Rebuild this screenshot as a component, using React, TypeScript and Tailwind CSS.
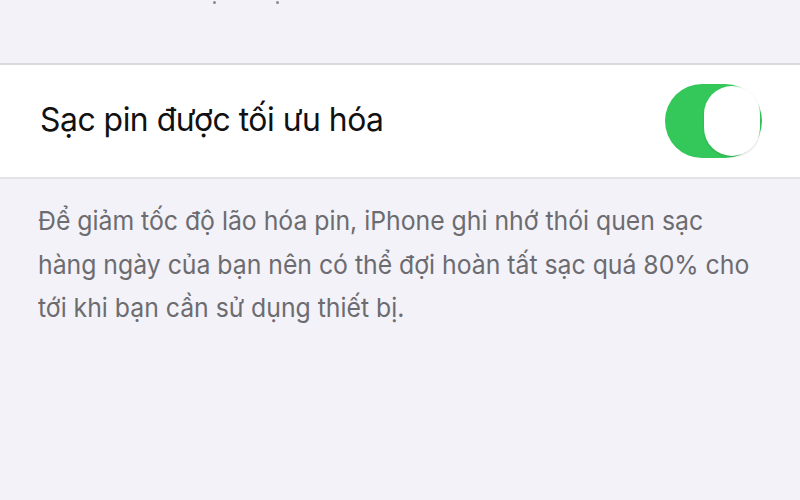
export default function App() {
  return (
    <div className="w-[800px] h-[500px] bg-[#f3f2f8] overflow-hidden flex flex-col" style={{ fontFamily: 'Inter, "Noto Sans", sans-serif' }}>
      <div className="h-[63px] flex items-start pt-[1px]">
        <div className="ml-[213px] w-[3px] h-[3px] rounded-full bg-[#8a8a90]" />
        <div className="ml-[60px] w-[3px] h-[3px] rounded-full bg-[#8a8a90]" />
      </div>
      <div className="h-[2px] bg-[#d9d9de]" />
      <div className="h-[112px] bg-white flex items-center justify-between pl-[40px] pr-[38px]">
        <div className="text-[33px] text-[#111] tracking-[-0.5px] origin-left scale-x-[0.966] whitespace-nowrap pb-[2px]">Sạc pin được tối ưu hóa</div>
        <div className="w-[97px] h-[74px] rounded-full bg-[#34c759] flex items-center justify-end pr-[2px]">
          <div className="w-[56px] h-[70px] rounded-full bg-white shadow-[0_1px_2px_rgba(0,0,0,0.15)]" />
        </div>
      </div>
      <div className="h-[2px] bg-[#e4e4e8]" />
      <div className="pl-[38px] pt-[20px]">
        <div className="text-[26px] leading-[43.5px] text-[#6c6c70] origin-left scale-x-[0.953] whitespace-nowrap">
          Để giảm tốc độ lão hóa pin, iPhone ghi nhớ thói quen sạc
          <br />
          hàng ngày của bạn nên có thể đợi hoàn tất sạc quá 80% cho
          <br />
          tới khi bạn cần sử dụng thiết bị.
        </div>
      </div>
    </div>
  );
}
